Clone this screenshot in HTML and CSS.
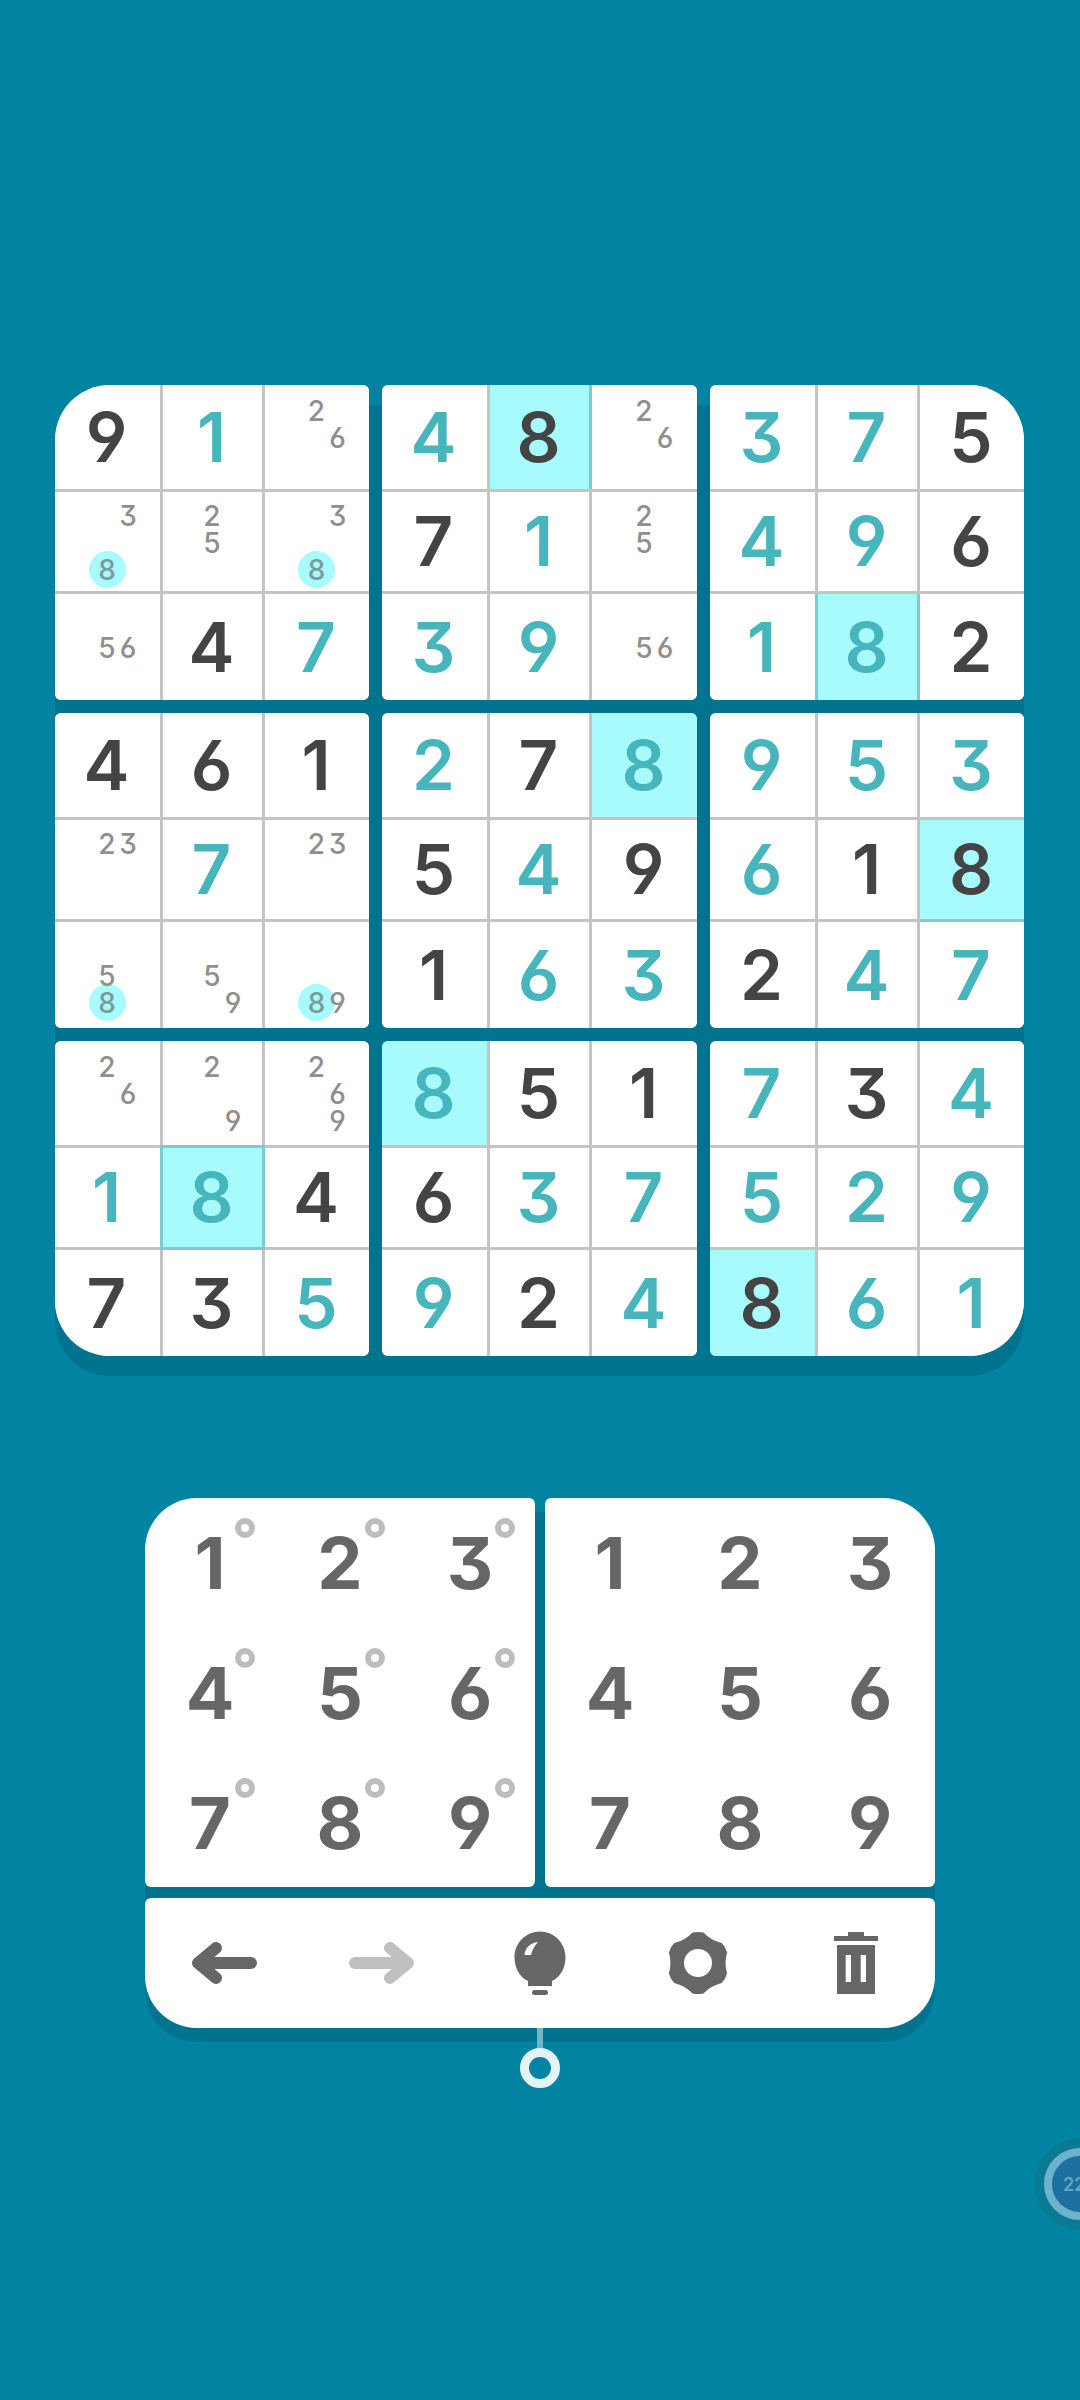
FILE: index.html
```html
<!DOCTYPE html>
<html lang="en">
<head>
<meta charset="UTF-8" />
<title>Sudoku</title>
<link rel="stylesheet" href="styles.css">
</head>
<body>
  <main class="screen">
    <!-- Board -->
    <section class="board">
      <div class="box tl">
        <div class="cell given">9</div><div class="cell user">1</div><div class="cell notes"><span class="n2">2</span><span class="n6">6</span></div>
        <div class="cell notes"><span class="n3">3</span><span class="n8 hit">8</span></div><div class="cell notes"><span class="n2">2</span><span class="n5">5</span></div><div class="cell notes"><span class="n3">3</span><span class="n8 hit">8</span></div>
        <div class="cell notes"><span class="n5">5</span><span class="n6">6</span></div><div class="cell given">4</div><div class="cell user">7</div>
      </div>
      <div class="box">
        <div class="cell user">4</div><div class="cell given hl line-r">8</div><div class="cell notes"><span class="n2">2</span><span class="n6">6</span></div>
        <div class="cell given">7</div><div class="cell user">1</div><div class="cell notes"><span class="n2">2</span><span class="n5">5</span></div>
        <div class="cell user">3</div><div class="cell user">9</div><div class="cell notes"><span class="n5">5</span><span class="n6">6</span></div>
      </div>
      <div class="box tr">
        <div class="cell user">3</div><div class="cell user">7</div><div class="cell given">5</div>
        <div class="cell user">4</div><div class="cell user">9</div><div class="cell given">6</div>
        <div class="cell user">1</div><div class="cell user hl line-lr">8</div><div class="cell given">2</div>
      </div>

      <div class="box">
        <div class="cell given">4</div><div class="cell given">6</div><div class="cell given">1</div>
        <div class="cell notes"><span class="n2">2</span><span class="n3">3</span></div><div class="cell user">7</div><div class="cell notes"><span class="n2">2</span><span class="n3">3</span></div>
        <div class="cell notes"><span class="n5">5</span><span class="n8 hit">8</span></div><div class="cell notes"><span class="n5">5</span><span class="n9">9</span></div><div class="cell notes"><span class="n8 hit">8</span><span class="n9">9</span></div>
      </div>
      <div class="box">
        <div class="cell user">2</div><div class="cell given">7</div><div class="cell user hl">8</div>
        <div class="cell given">5</div><div class="cell user">4</div><div class="cell given">9</div>
        <div class="cell given">1</div><div class="cell user">6</div><div class="cell user">3</div>
      </div>
      <div class="box">
        <div class="cell user">9</div><div class="cell user">5</div><div class="cell user">3</div>
        <div class="cell user">6</div><div class="cell given">1</div><div class="cell given hl line-b">8</div>
        <div class="cell given">2</div><div class="cell user">4</div><div class="cell user">7</div>
      </div>

      <div class="box bl">
        <div class="cell notes"><span class="n2">2</span><span class="n6">6</span></div><div class="cell notes"><span class="n2">2</span><span class="n9">9</span></div><div class="cell notes"><span class="n2">2</span><span class="n6">6</span><span class="n9">9</span></div>
        <div class="cell user">1</div><div class="cell user hl line-all">8</div><div class="cell given">4</div>
        <div class="cell given">7</div><div class="cell given">3</div><div class="cell user">5</div>
      </div>
      <div class="box">
        <div class="cell user hl">8</div><div class="cell given">5</div><div class="cell given">1</div>
        <div class="cell given">6</div><div class="cell user">3</div><div class="cell user">7</div>
        <div class="cell user">9</div><div class="cell given">2</div><div class="cell user">4</div>
      </div>
      <div class="box br">
        <div class="cell user">7</div><div class="cell given">3</div><div class="cell user">4</div>
        <div class="cell user">5</div><div class="cell user">2</div><div class="cell user">9</div>
        <div class="cell given hl">8</div><div class="cell user">6</div><div class="cell user">1</div>
      </div>
    </section>

    <!-- Number pads -->
    <section class="controls">
      <div class="pads">
        <div class="pad pad-notes">
          <button class="key">1</button><button class="key">2</button><button class="key">3</button>
          <button class="key">4</button><button class="key">5</button><button class="key">6</button>
          <button class="key">7</button><button class="key">8</button><button class="key">9</button>
        </div>
        <div class="pad pad-fill">
          <button class="key">1</button><button class="key">2</button><button class="key">3</button>
          <button class="key">4</button><button class="key">5</button><button class="key">6</button>
          <button class="key">7</button><button class="key">8</button><button class="key">9</button>
        </div>
      </div>

      <div class="toolbar">
        <button class="tool" aria-label="Undo">
          <svg width="66" height="44" viewBox="0 0 66 44"><path class="arrow" d="M60 22H12M25 7L7 22L25 37" /></svg>
        </button>
        <button class="tool" aria-label="Redo">
          <svg class="off" width="66" height="44" viewBox="0 0 66 44"><path class="arrow" d="M6 22H54M41 7L59 22L41 37" /></svg>
        </button>
        <button class="tool" aria-label="Hint">
          <svg width="52" height="64" viewBox="0 0 52 64">
            <path d="M14 55V50C5 46 .5 36 .5 26C.5 12 12 .5 26 .5S51.500 12 51.500 26C51.500 36 47 46 38 50V55Z" />
            <rect x="18" y="59" width="16" height="5" rx="2.500" />
            <path class="shine" d="M10.500 24C11 17 16 12 24 11C20.500 15 18 19 17 24Z" />
          </svg>
        </button>
        <button class="tool" aria-label="Settings">
          <svg width="62" height="62" viewBox="0 0 62 62">
            <path fill-rule="evenodd" d="M25.600 .5Q31 -.5 36.400 .5Q44 8.500 54.700 11.100Q58.700 15 60.100 20.400Q57 31 60.100 41.600Q58.700 47 54.700 50.900Q44 53.500 36.400 61.500Q31 62.500 25.600 61.500Q18 53.500 7.300 50.900Q3.300 47 1.900 41.600Q5 31 1.900 20.400Q3.300 15 7.300 11.100Q18 8.500 25.600 .5ZM31 17A14 14 0 1 0 31 45A14 14 0 1 0 31 17Z" />
          </svg>
        </button>
        <button class="tool" aria-label="Erase">
          <svg width="44" height="62" viewBox="0 0 44 62">
            <path fill-rule="evenodd" d="M14 0H30V4H44V9H0V4H14ZM3 13H41V62H3ZM11.700 23V50H17V23ZM26.700 23V50H32V23Z" />
          </svg>
        </button>
      </div>
    </section>
  </main>

  <!-- Floating overlays from the system -->
  <div class="pointer"><div class="pointer-stem"></div><div class="pointer-ring"></div></div>
  <div class="bubble"><div class="bubble-ring"><span>22</span></div></div>
</body>
</html>
```

FILE: styles.css
```css
*, *::before, *::after {
  box-sizing: border-box;
}

html, body {
  margin: 0;
  padding: 0;
}

body {
  position: relative;
  width: 1080px;
  height: 2400px;
  overflow: hidden;
  background: #0283a2;
  font-family: "Inter", "Lato", sans-serif;
  /* flat top 3, open 6 and 9 */
  font-feature-settings: "cv03", "cv04", "cv09";
}

.screen {
  display: flex;
  flex-direction: column;
  align-items: center;
  padding-top: 385px;
}

/* Board */
.board {
  position: relative;
  display: grid;
  grid-template-columns: 314px 315px 314px;
  grid-auto-rows: 315px;
  gap: 13px;
  margin-left: -1px;
}

/* one drop shadow under the whole board, it also shows through the gaps */
.board::before {
  content: "";
  position: absolute;
  inset: 20px 0 -20px 0;
  z-index: -1;
  background: #00748e;
  border-radius: 55px;
}

.box {
  display: grid;
  grid-template-columns: 105px 99px 1fr;
  grid-template-rows: 104px 99px 106px;
  gap: 3px;
  background: #c4c4c4;
  border-radius: 6px;
  overflow: hidden;
}

.box.tl { border-top-left-radius: 55px; }
.box.tr { border-top-right-radius: 55px; }
.box.bl { border-bottom-left-radius: 55px; }
.box.br { border-bottom-right-radius: 55px; }

.cell {
  position: relative;
  display: flex;
  align-items: center;
  justify-content: center;
  padding-right: 2px;
  background: #fff;
  font-size: 69px;
  font-weight: 600;
  line-height: 1;
}

.given { color: #444; }
.user { color: #47b5bc; }

.cell.hl {
  z-index: 1;
  background: #a8fbfd;
}

.cell.line-r { box-shadow: 3px 0 0 #7ccccf; }
.cell.line-b { box-shadow: 0 3px 0 #8cc8cb; }
.cell.line-lr { box-shadow: -3px 0 0 #7ccccf, 3px 0 0 #7ccccf; }
.cell.line-all { box-shadow: 0 0 0 3px #7ccccf; }

.cell.notes {
  display: grid;
  grid-template-columns: repeat(3, 21px);
  grid-template-rows: repeat(3, 27px);
  justify-content: center;
  align-content: center;
  padding: 2px 1px 0 0;
  color: #8f8f8f;
  font-size: 28px;
  font-weight: 500;
}

.notes span {
  position: relative;
  display: flex;
  align-items: center;
  justify-content: center;
  z-index: 1;
}

.n2 { grid-area: 1 / 2; }
.n3 { grid-area: 1 / 3; }
.n5 { grid-area: 2 / 2; }
.n6 { grid-area: 2 / 3; }
.n8 { grid-area: 3 / 2; }
.n9 { grid-area: 3 / 3; }

.notes .hit {
  z-index: 0;
  color: #7a9a9c;
}

.notes .hit::before {
  content: "";
  position: absolute;
  left: -8px;
  top: -5px;
  width: 37px;
  height: 37px;
  border-radius: 50%;
  background: #a8fbfd;
  z-index: -1;
}

/* Number pads */
.controls {
  position: relative;
  display: flex;
  flex-direction: column;
  gap: 11px;
  width: 790px;
  margin-top: 142px;
}

.controls::before {
  content: "";
  position: absolute;
  inset: 14px 0 -14px 0;
  z-index: -1;
  background: #00748e;
  border-radius: 52px;
}

.pads {
  display: flex;
  gap: 10px;
}

.pad {
  display: grid;
  grid-template-columns: repeat(3, 130px);
  grid-template-rows: repeat(3, 130px);
  width: 390px;
  height: 389px;
  background: #fff;
  border-radius: 6px;
}

.pad-notes { border-top-left-radius: 52px; }
.pad-fill { border-top-right-radius: 52px; }

button {
  border: none;
  padding: 0;
  background: none;
  font-family: inherit;
  font-feature-settings: inherit;
}

.key {
  position: relative;
  color: #666;
  font-size: 72px;
  font-weight: 750;
  line-height: 1;
}

.pad-notes .key::after {
  content: "";
  position: absolute;
  left: 90px;
  top: 20px;
  width: 20px;
  height: 20px;
  border: 6px solid #bdbdbd;
  border-radius: 50%;
}

.toolbar {
  display: grid;
  grid-template-columns: repeat(5, 1fr);
  height: 130px;
  background: #fff;
  border-radius: 6px 6px 52px 52px;
}

.tool {
  display: flex;
  align-items: center;
  justify-content: center;
}

.tool svg {
  display: block;
  fill: #666;
}

.arrow {
  fill: none;
  stroke: #666;
  stroke-width: 12;
  stroke-linecap: round;
  stroke-linejoin: round;
}

.off .arrow { stroke: #c0c0c0; }
.tool .shine { fill: #fff; }

/* Overlays */
.pointer {
  position: absolute;
  left: 520px;
  top: 2028px;
  display: flex;
  flex-direction: column;
  align-items: center;
  width: 40px;
}

.pointer-stem {
  width: 6px;
  height: 20px;
  background: #72b5c8;
}

.pointer-ring {
  width: 40px;
  height: 40px;
  border: 9px solid #e4f3f6;
  border-radius: 50%;
}

.bubble {
  position: absolute;
  left: 1035px;
  top: 2139px;
  width: 90px;
  height: 90px;
  padding: 9px;
  border-radius: 50%;
  background: #0a7a94;
}

.bubble-ring {
  display: flex;
  align-items: center;
  width: 72px;
  height: 72px;
  padding-left: 11px;
  border: 8px solid #6db3c9;
  border-radius: 50%;
  background: #1c6f9f;
  color: #5fa8c4;
  font-size: 18px;
  font-weight: 600;
}
```
